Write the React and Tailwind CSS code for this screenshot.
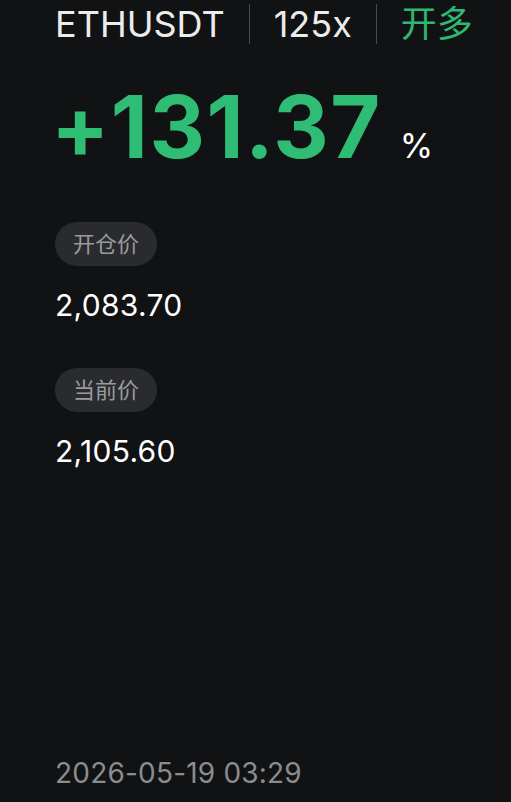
const font = {
  fontFamily: 'Inter, "Noto Sans CJK SC", sans-serif',
};

function Label({ children }) {
  return (
    <div className="flex h-[44px] w-[102px] items-center justify-center rounded-full bg-[#2a2b2e] text-[22px] text-[#9a9b9d]">
      {children}
    </div>
  );
}

export default function App() {
  return (
    <div
      className="flex h-[802px] w-[511px] flex-col bg-[#111214] pl-[55px] text-white"
      style={font}
    >
      <div className="flex h-[46px] items-center pt-[2px] text-[36px] leading-none text-[#ececec]">
        <span>ETHUSDT</span>
        <div className="mx-[24px] h-[40px] w-px bg-[#4a4b4e]" />
        <span>125x</span>
        <div className="mx-[24px] h-[40px] w-px bg-[#4a4b4e]" />
        <span className="text-[#2fb873]">开多</span>
      </div>

      <div className="mt-[38px] -ml-[4px] flex items-baseline">
        <span className="text-[86px] font-bold leading-none tracking-[1.5px] text-[#2fbd75]">
          +131.37
        </span>
        <span className="ml-[18px] text-[34px] leading-none text-white">%</span>
      </div>

      <div className="mt-[52px]">
        <Label>开仓价</Label>
      </div>
      <div className="mt-[24px] text-[30px] leading-none tracking-[0.3px]">2,083.70</div>

      <div className="mt-[48px]">
        <Label>当前价</Label>
      </div>
      <div className="mt-[24px] text-[30px] leading-none tracking-[0.3px]">2,105.60</div>

      <div className="mt-auto mb-[8px] text-[28px] tracking-[0.2px] text-[#8b8c8e]">
        2026-05-19 03:29
      </div>
    </div>
  );
}
